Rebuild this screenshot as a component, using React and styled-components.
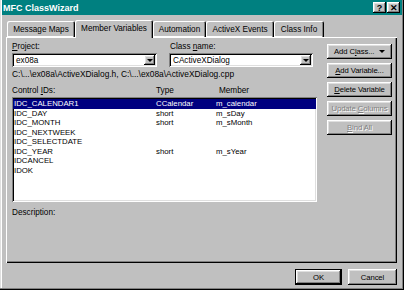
import React from "react";
import styled, { createGlobalStyle } from "styled-components";

const Global = createGlobalStyle`
  body {
    margin: 0;
    font-family: "Liberation Sans", Arial, sans-serif;
    font-size: 8.2px;
    color: #000;
  }
`;

const raised = `
  box-shadow: inset -1px -1px #000, inset 1px 1px #fff,
    inset -2px -2px #808080, inset 2px 2px #dfdfdf;
`;

const sunken = `
  box-shadow: inset 1px 1px #808080, inset -1px -1px #fff,
    inset 2px 2px #000, inset -2px -2px #dfdfdf;
`;

const Window = styled.div`
  width: 404px;
  height: 290px;
  box-sizing: border-box;
  background: #c0c0c0;
  padding: 0 2px 2px 2px;
  box-shadow: inset -1px -1px #000, inset -2px -2px #808080,
    inset 1px 0 #dfdfdf, inset 2px 0 #fff;
`;

const TitleBar = styled.div`
  height: 15px;
  background: #008080;
  display: flex;
  align-items: center;
  justify-content: space-between;
  padding: 0 2px 0 1px;
  color: #fff;
  font-weight: bold;
  font-size: 9px;
`;

const TitleButtons = styled.div`
  display: flex;
  gap: 1px;
`;

const TitleButton = styled.div`
  width: 13px;
  height: 11px;
  background: #c0c0c0;
  color: #000;
  display: flex;
  align-items: center;
  justify-content: center;
  font-size: 9px;
  font-weight: bold;
  ${raised}
`;

const TabStrip = styled.div`
  display: flex;
  align-items: flex-end;
  height: 18px;
  margin-top: 4px;
  padding-left: 5px;
  position: relative;
  z-index: 1;
`;

const Tab = styled.div`
  width: ${(p) => p.w}px;
  height: ${(p) => (p.active ? 18 : 16)}px;
  box-sizing: border-box;
  display: flex;
  align-items: center;
  justify-content: center;
  background: #c0c0c0;
  border-radius: 2px 2px 0 0;
  margin-bottom: ${(p) => (p.active ? -1 : 0)}px;
  padding-bottom: ${(p) => (p.active ? 1 : 0)}px;
  box-shadow: inset 1px 1px #fff, inset -1px 0 #000, inset -2px 0 #808080
    ${(p) => (p.active ? "" : ", inset 0 -1px #fff")};
  white-space: nowrap;
`;

const Panel = styled.div`
  margin-left: 4px;
  width: 391px;
  height: 226px;
  box-sizing: border-box;
  padding: 5px 5px 0 6px;
  display: grid;
  grid-template-columns: 305px 65px;
  column-gap: 10px;
  box-shadow: inset 1px 1px #fff, inset -1px -1px #000,
    inset -2px -2px #808080;
`;

const LeftCol = styled.div`
  display: flex;
  flex-direction: column;
`;

const FieldsRow = styled.div`
  display: flex;
  gap: 12px;
`;

const Field = styled.div`
  width: ${(p) => p.w}px;
  display: flex;
  flex-direction: column;
`;

const Label = styled.div`
  height: 11px;
  line-height: 10px;
  padding-left: ${(p) => p.indent || 0}px;
`;

const Combo = styled.div`
  height: 14px;
  background: #fff;
  box-sizing: border-box;
  padding: 2px;
  display: flex;
  align-items: center;
  ${sunken}
`;

const ComboText = styled.div`
  flex: 1;
  padding-left: 2px;
`;

const ComboArrow = styled.div`
  width: 11px;
  height: 10px;
  background: #c0c0c0;
  display: flex;
  align-items: center;
  justify-content: center;
  ${raised}
  &::after {
    content: "";
    border-left: 3px solid transparent;
    border-right: 3px solid transparent;
    border-top: 3px solid #000;
  }
`;

const PathLine = styled.div`
  margin-top: 2px;
  line-height: 10px;
  font-size: 8.4px;
  white-space: nowrap;
`;

const Columns = styled.div`
  display: grid;
  grid-template-columns: ${(p) => p.cols};
  line-height: ${(p) => p.lh || 10}px;
  white-space: nowrap;
`;

const Headers = styled(Columns)`
  margin-top: 7px;
`;

const List = styled.div`
  margin-top: 1px;
  height: 105px;
  box-sizing: border-box;
  background: #fff;
  padding: 2px 1px 2px 2px;
  font-size: 7.8px;
  ${sunken}
`;

const Row = styled(Columns)`
  background: ${(p) => (p.selected ? "#000080" : "transparent")};
  color: ${(p) => (p.selected ? "#fff" : "#000")};
  margin-left: -1px;
  padding-left: 1px;
`;

const Description = styled.div`
  margin-top: 6px;
  line-height: 10px;
`;

const RightCol = styled.div`
  display: flex;
  flex-direction: column;
  gap: 4px;
  padding-top: 2px;
`;

const Button = styled.div`
  height: ${(p) => p.h || 15}px;
  width: ${(p) => (p.w ? `${p.w}px` : "auto")};
  box-sizing: border-box;
  background: #c0c0c0;
  display: flex;
  align-items: center;
  justify-content: ${(p) => (p.split ? "space-between" : "center")};
  padding: ${(p) => (p.split ? "0 7px 0 7px" : "0")};
  font-size: 7.7px;
  letter-spacing: -0.1px;
  white-space: nowrap;
  color: ${(p) => (p.disabled ? "#808080" : "#000")};
  text-shadow: ${(p) => (p.disabled ? "1px 1px #fff" : "none")};
  ${raised}
  ${(p) =>
    p.primary &&
    `box-shadow: inset 0 0 0 1px #000, inset -2px -2px #000, inset 2px 2px #fff,
      inset -3px -3px #808080, inset 3px 3px #dfdfdf;`}
`;

const DropArrow = styled.span`
  width: 0;
  height: 0;
  border-left: 3px solid transparent;
  border-right: 3px solid transparent;
  border-top: 3px solid #000;
`;

const Footer = styled.div`
  display: flex;
  justify-content: flex-end;
  gap: 6px;
  margin-top: 6px;
  padding-right: 5px;
`;

const controls = [
  ["IDC_CALENDAR1", "CCalendar", "m_calendar"],
  ["IDC_DAY", "short", "m_sDay"],
  ["IDC_MONTH", "short", "m_sMonth"],
  ["IDC_NEXTWEEK", "", ""],
  ["IDC_SELECTDATE", "", ""],
  ["IDC_YEAR", "short", "m_sYear"],
  ["IDCANCEL", "", ""],
  ["IDOK", "", ""],
];

const tabs = [
  ["Message Maps", 68],
  ["Member Variables", 78],
  ["Automation", 53],
  ["ActiveX Events", 68],
  ["Class Info", 50],
];

export default function App() {
  return (
    <Window>
      <Global />
      <TitleBar>
        <span>MFC ClassWizard</span>
        <TitleButtons>
          <TitleButton>?</TitleButton>
          <TitleButton>✕</TitleButton>
        </TitleButtons>
      </TitleBar>
      <TabStrip>
        {tabs.map(([name, w]) => (
          <Tab key={name} w={w} active={name === "Member Variables"}>
            {name}
          </Tab>
        ))}
      </TabStrip>
      <Panel>
        <LeftCol>
          <FieldsRow>
            <Field w={145}>
              <Label>
                <u>P</u>roject:
              </Label>
              <Combo>
                <ComboText>ex08a</ComboText>
                <ComboArrow />
              </Combo>
            </Field>
            <Field w={144}>
              <Label indent={1}>
                Class <u>n</u>ame:
              </Label>
              <Combo>
                <ComboText>CActiveXDialog</ComboText>
                <ComboArrow />
              </Combo>
            </Field>
          </FieldsRow>
          <PathLine>
            C:\...\ex08a\ActiveXDialog.h, C:\...\ex08a\ActiveXDialog.cpp
          </PathLine>
          <Headers cols="144px 63px 1fr">
            <span>
              Control <u>I</u>Ds:
            </span>
            <span>Type</span>
            <span>Member</span>
          </Headers>
          <List>
            {controls.map(([id, type, member], i) => (
              <Row key={id} cols="142px 60px 1fr" lh={9.5} selected={i === 0}>
                <span>{id}</span>
                <span>{type}</span>
                <span>{member}</span>
              </Row>
            ))}
          </List>
          <Description>Description:</Description>
        </LeftCol>
        <RightCol>
          <Button split>
            <span>
              Add C<u>l</u>ass...
            </span>
            <DropArrow />
          </Button>
          <Button>
            <span>
              <u>A</u>dd Variable...
            </span>
          </Button>
          <Button>
            <span>
              <u>D</u>elete Variable
            </span>
          </Button>
          <Button disabled>
            <span>
              Update <u>C</u>olumns
            </span>
          </Button>
          <Button disabled>
            <span>
              <u>B</u>ind All
            </span>
          </Button>
        </RightCol>
      </Panel>
      <Footer>
        <Button primary w={47} h={16}>
          OK
        </Button>
        <Button w={49} h={16}>
          Cancel
        </Button>
      </Footer>
    </Window>
  );
}
